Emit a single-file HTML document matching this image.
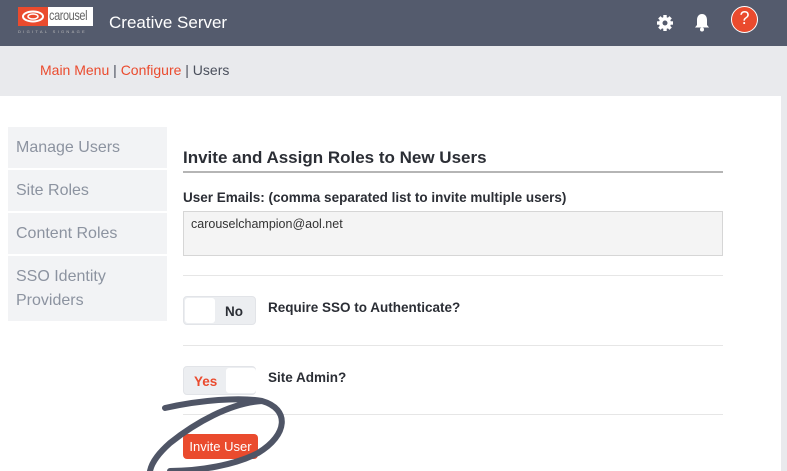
<!DOCTYPE html>
<html><head><style>
*{margin:0;padding:0;box-sizing:border-box}
body{width:787px;height:471px;overflow:hidden;background:#e9eaed;font-family:"Liberation Sans",sans-serif;position:relative}
.hdr{position:absolute;left:0;top:0;width:787px;height:46px;background:#545b6d}
.bc{position:absolute;left:40px;top:62px;font-size:14px;color:#4a4f5c}
.bc a{color:#ea4b2e;text-decoration:none}
.main{position:absolute;left:0;top:96px;width:781px;height:375px;background:#fff}
.side{position:absolute;left:8px;width:159px;background:#f2f3f5;color:#8c93a0;font-size:16px;padding:9px 0 0 8px;line-height:24px}
.abs{position:absolute}
.tog{position:absolute;width:73px;height:29px;background:#eceef1;border-radius:4px;border:1px solid #e2e4e8}
.knob{position:absolute;top:1px;width:30px;height:25px;background:#fff;border-radius:3px}
.lbl{font-weight:bold;font-size:13.5px;color:#2b2e35}
</style></head><body>
<div class="hdr">
 <div class="abs" style="left:18px;top:7px;width:75px;height:19px;background:#fff"></div>
 <div class="abs" style="left:18px;top:7px;width:30px;height:19px;background:#ea4b2e"></div>
 <svg class="abs" style="left:20px;top:9px" width="26" height="15"><ellipse cx="13" cy="7.5" rx="10" ry="5" fill="none" stroke="#fff" stroke-width="2"/><ellipse cx="13" cy="7.5" rx="5" ry="2.5" fill="none" stroke="#fff" stroke-width="1.5"/></svg>
 <div class="abs" style="left:49px;top:7px;font-size:14px;color:#666;letter-spacing:-0.5px;transform:scaleX(.78);transform-origin:left">carousel</div>
 <div class="abs" style="left:18px;top:29px;font-size:4px;color:#bbb;letter-spacing:2.3px">DIGITAL SIGNAGE</div>
 <div class="abs" style="left:109px;top:13px;font-size:17px;color:#fff">Creative Server</div>
 <svg class="abs" style="left:656px;top:14px" width="18" height="18" viewBox="0 0 18 18"><g fill="#fff"><circle cx="9" cy="9" r="6"/><rect x="7.3" y="1" width="3.4" height="16"/><rect x="1" y="7.3" width="16" height="3.4"/><rect x="7.3" y="1" width="3.4" height="16" transform="rotate(45 9 9)"/><rect x="7.3" y="1" width="3.4" height="16" transform="rotate(-45 9 9)"/></g><circle cx="9" cy="9" r="2.5" fill="#545b6d"/></svg>
 <svg class="abs" style="left:693px;top:13px" width="18" height="19" viewBox="0 0 18 19"><path d="M9 1C5.5 1 4 4 4 7v5l-2 2.5h14L14 12V7c0-3-1.5-6-5-6z" fill="#fff"/><circle cx="9" cy="16.5" r="2" fill="#fff"/></svg>
 <div class="abs" style="left:731px;top:6px;width:27px;height:27px;border-radius:50%;background:#ea4b2e;border:1.5px solid #fff;color:#fff;font-size:18px;text-align:center;line-height:23px">?</div>
</div>
<div class="bc"><a>Main Menu</a> | <a>Configure</a> | Users</div>
<div class="main"></div>
<div class="side" style="top:127px;height:41px">Manage Users</div>
<div class="side" style="top:170px;height:41px">Site Roles</div>
<div class="side" style="top:213px;height:41px">Content Roles</div>
<div class="side" style="top:256px;height:65px">SSO Identity<br>Providers</div>
<div class="abs" style="left:183px;top:148px;font-size:17px;font-weight:bold;color:#2b2e35">Invite and Assign Roles to New Users</div>
<div class="abs" style="left:183px;top:171px;width:540px;height:2px;background:#b5b5b5"></div>
<div class="abs lbl" style="left:183px;top:190px">User Emails: (comma separated list to invite multiple users)</div>
<div class="abs" style="left:183px;top:211px;width:540px;height:45px;background:#f4f4f4;border:1px solid #d6d6d6;font-size:12.5px;color:#333;padding:5px 7px">carouselchampion@aol.net</div>
<div class="abs" style="left:183px;top:275px;width:540px;height:1px;background:#e6e6e6"></div>
<div class="tog" style="left:183px;top:296px"><div class="knob" style="left:1px"></div><span class="abs lbl" style="left:41px;top:7px">No</span></div>
<div class="abs lbl" style="left:268px;top:300px">Require SSO to Authenticate?</div>
<div class="abs" style="left:183px;top:345px;width:540px;height:1px;background:#e6e6e6"></div>
<div class="tog" style="left:183px;top:366px"><span class="abs lbl" style="left:10px;top:7px;color:#ea4b2e">Yes</span><div class="knob" style="left:42px"></div></div>
<div class="abs lbl" style="left:268px;top:370px">Site Admin?</div>
<div class="abs" style="left:183px;top:414px;width:540px;height:1px;background:#e6e6e6"></div>
<div class="abs" style="left:183px;top:434px;width:75px;height:25px;background:#ea4b2e;border-radius:4px;color:#fff;font-size:13px;text-align:center;line-height:25px">Invite User</div>
<svg class="abs" style="left:140px;top:395px" width="160" height="76"><path d="M25 13C60 5 100 2 122 6C150 14 148 40 118 58C95 70 60 76 30 76M122 6C90 8 55 28 30 48C20 57 12 66 10 76" fill="none" stroke="#4f5566" stroke-width="6" stroke-linecap="round"/></svg>
</body></html>
